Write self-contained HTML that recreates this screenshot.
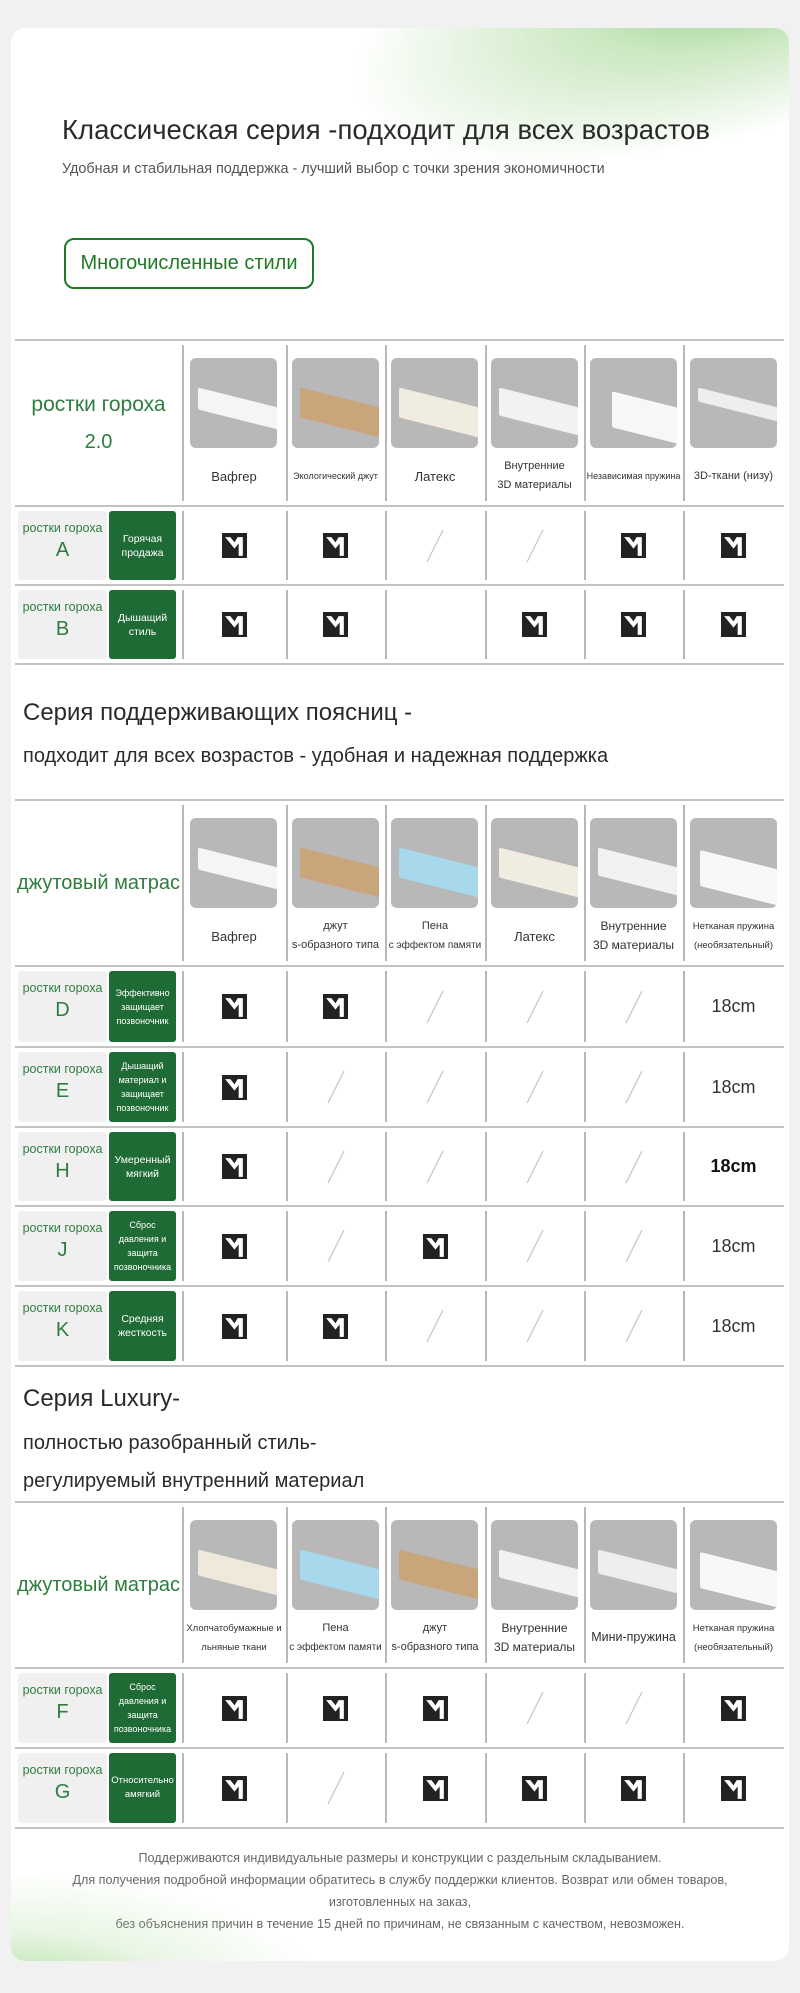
<!DOCTYPE html>
<html><head><meta charset="utf-8">
<style>
*{margin:0;padding:0;box-sizing:border-box}
body{width:800px;height:1993px;background:#f1f1f1;font-family:"Liberation Sans","DejaVu Sans",sans-serif;position:relative;overflow:hidden}
.card{position:absolute;left:11px;top:28px;width:778px;height:1933px;background:#fff;border-radius:14px;overflow:hidden}
.card:before{content:'';position:absolute;right:-80px;top:-150px;width:560px;height:320px;background:radial-gradient(ellipse at 88% 45%,rgba(110,190,95,.9) 0%,rgba(140,205,120,.45) 30%,rgba(255,255,255,0) 65%);transform:rotate(-18deg)}
.card:after{content:'';position:absolute;left:-80px;bottom:-70px;width:420px;height:170px;background:radial-gradient(ellipse at 20% 80%,rgba(120,200,100,.6) 0%,rgba(170,220,150,.25) 35%,rgba(255,255,255,0) 65%)}
.abs{position:absolute;white-space:nowrap}
.t1{left:51px;top:86px;font-size:27.5px;color:#2a2a2a}
.t2{left:51px;top:133px;font-size:14.4px;color:#555}
.btn{position:absolute;left:53px;top:210px;width:250px;height:51px;border:2px solid #1e7a24;border-radius:10px;color:#1e7a24;font-size:20px;display:flex;align-items:center;justify-content:center}
.h{color:#2a2a2a}
.tbl{position:absolute;left:15px;width:769px}
.hl{height:2px;background:#c2c2c2}
.row{display:grid;grid-template-columns:167px 104px 99px 100px 99px 99px 101px;position:relative}
.c{position:relative;display:flex;align-items:center;justify-content:center}
.s:before{content:'';position:absolute;left:0;top:4px;bottom:4px;width:2px;background:#b8b8b8}
.im{position:absolute;top:17px;left:50%;margin-left:-44px;width:87px;height:90px;background:#b8b8b8;border-radius:6px;overflow:hidden}
.sl1{position:absolute;left:8px;top:42px;width:100px;height:22px;transform:skewY(14deg);border-radius:2px}
.cap{position:absolute;left:0;right:0;text-align:center;color:#333;font-size:12px;line-height:19px;white-space:nowrap}
.ck{width:25px;height:25px}
.sl{width:20px;height:34px}
.lab{position:relative}
.g{position:absolute;left:3px;top:4px;bottom:4px;width:89px;background:#f0f0f0;border-radius:3px;color:#2e7d3e;text-align:center}
.g span{display:block;font-size:12.5px;margin-top:10px}
.g b{display:block;font-weight:normal;font-size:20px;margin-top:4px}
.gr{position:absolute;left:94px;top:4px;bottom:4px;width:67px;background:#1f6b35;border-radius:3px;color:#fff;font-size:10.5px;line-height:14px;display:flex;align-items:center;justify-content:center;text-align:center}
.lh{color:#2e7d3e;font-size:20px;display:flex;align-items:center;justify-content:center;flex-direction:column;text-align:center}
.cm{font-size:18px;color:#333}
.ft{position:absolute;left:0;width:778px;text-align:center;color:#666;font-size:12.6px}
</style></head><body>
<div class="card">
<div class="abs t1">Классическая серия -подходит для всех возрастов</div>
<div class="abs t2">Удобная и стабильная поддержка - лучший выбор с точки зрения экономичности</div>
<div class="btn">Многочисленные стили</div>
<div class="abs h" style="left:12px;top:671px;font-size:24px">Серия поддерживающих поясниц -</div>
<div class="abs h" style="left:12px;top:717px;font-size:20px">подходит для всех возрастов - удобная и надежная поддержка</div>
<div class="abs h" style="left:12px;top:1357px;font-size:24px">Серия Luxury-</div>
<div class="abs h" style="left:12px;top:1404px;font-size:20px">полностью разобранный стиль-</div>
<div class="abs h" style="left:12px;top:1442px;font-size:20px">регулируемый внутренний материал</div>
<div class="ft" style="top:1823px">Поддерживаются индивидуальные размеры и конструкции с раздельным складыванием.</div>
<div class="ft" style="top:1845px">Для получения подробной информации обратитесь в службу поддержки клиентов. Возврат или обмен товаров,</div>
<div class="ft" style="top:1867px">изготовленных на заказ,</div>
<div class="ft" style="top:1889px">без объяснения причин в течение 15 дней по причинам, не связанным с качеством, невозможен.</div>
</div>

<svg width="0" height="0" style="position:absolute"><defs>
<symbol id="ck" viewBox="0 0 24 24"><rect width="24" height="24" fill="#222"/><path d="M3 4 L8 4 L12 9 L15 4 L20 4 L20 22 L16 22 L16 10 L12 15 Z" fill="#fff"/></symbol>
<symbol id="sl" viewBox="0 0 20 34"><line x1="2" y1="33" x2="18" y2="1" stroke="#c8c8c8" stroke-width="1.3"/></symbol>
</defs></svg>

<!-- TABLE 1 -->
<div class="tbl" style="top:339px">
<div class="hl"></div>
<div class="row" style="height:164px">
<div class="c lh"><div style="font-size:21px">ростки гороха</div><div style="margin-top:14px">2.0</div></div>
<div class="c s"><div class="im"><div class="sl1" style="background:#f5f5f5"></div></div><div class="cap" style="top:126px;font-size:13px">Вафгер</div></div>
<div class="c s"><div class="im"><div class="sl1" style="background:#c9a57c;height:30px"></div></div><div class="cap" style="top:126px;font-size:9px">Экологический джут</div></div>
<div class="c s"><div class="im"><div class="sl1" style="background:#f0ede0;height:30px"></div></div><div class="cap" style="top:126px;font-size:13px">Латекс</div></div>
<div class="c s"><div class="im"><div class="sl1" style="background:#f2f2f2;height:28px"></div></div><div class="cap" style="top:116px;font-size:11px">Внутренние<br>3D материалы</div></div>
<div class="c s"><div class="im"><div class="sl1" style="background:#f7f7f7;height:36px;left:22px;width:70px"></div></div><div class="cap" style="top:126px;font-size:9px">Независимая пружина</div></div>
<div class="c s"><div class="im"><div class="sl1" style="background:#eee;height:14px"></div></div><div class="cap" style="top:126px;font-size:11px">3D-ткани (низу)</div></div>
</div>
<div class="hl"></div>
<div class="row" style="height:77px">
<div class="lab"><div class="g"><span>ростки гороха</span><b>A</b></div><div class="gr">Горячая<br>продажа</div></div>
<div class="c s"><svg class="ck"><use href="#ck"/></svg></div>
<div class="c s"><svg class="ck"><use href="#ck"/></svg></div>
<div class="c s"><svg class="sl"><use href="#sl"/></svg></div>
<div class="c s"><svg class="sl"><use href="#sl"/></svg></div>
<div class="c s"><svg class="ck"><use href="#ck"/></svg></div>
<div class="c s"><svg class="ck"><use href="#ck"/></svg></div>
</div>
<div class="hl"></div>
<div class="row" style="height:77px">
<div class="lab"><div class="g"><span>ростки гороха</span><b>B</b></div><div class="gr">Дышащий<br>стиль</div></div>
<div class="c s"><svg class="ck"><use href="#ck"/></svg></div>
<div class="c s"><svg class="ck"><use href="#ck"/></svg></div>
<div class="c s"></div>
<div class="c s"><svg class="ck"><use href="#ck"/></svg></div>
<div class="c s"><svg class="ck"><use href="#ck"/></svg></div>
<div class="c s"><svg class="ck"><use href="#ck"/></svg></div>
</div>
<div class="hl"></div>
</div>

<!-- TABLE 2 -->
<div class="tbl" style="top:799px">
<div class="hl"></div>
<div class="row" style="height:164px">
<div class="c lh">джутовый матрас</div>
<div class="c s"><div class="im"><div class="sl1" style="background:#f5f5f5"></div></div><div class="cap" style="top:126px;font-size:13px">Вафгер</div></div>
<div class="c s"><div class="im"><div class="sl1" style="background:#c9a57c;height:30px"></div></div><div class="cap" style="top:116px;font-size:11px">джут<br>s-образного типа</div></div>
<div class="c s"><div class="im"><div class="sl1" style="background:#a8d8ec;height:30px"></div></div><div class="cap" style="top:116px;font-size:11px">Пена<br><span style="font-size:10px">с эффектом памяти</span></div></div>
<div class="c s"><div class="im"><div class="sl1" style="background:#f0ede0;height:30px"></div></div><div class="cap" style="top:126px;font-size:13px">Латекс</div></div>
<div class="c s"><div class="im"><div class="sl1" style="background:#f2f2f2;height:28px"></div></div><div class="cap" style="top:116px;font-size:12px">Внутренние<br>3D материалы</div></div>
<div class="c s"><div class="im"><div class="sl1" style="background:#f7f7f7;height:36px;left:10px;width:80px"></div></div><div class="cap" style="top:116px;font-size:9.5px">Нетканая пружина<br>(необязательный)</div></div>
</div>
<div class="hl"></div>
<div class="row" style="height:79px">
<div class="lab"><div class="g"><span>ростки гороха</span><b>D</b></div><div class="gr" style="font-size:9px">Эффективно<br>защищает<br>позвоночник</div></div>
<div class="c s"><svg class="ck"><use href="#ck"/></svg></div>
<div class="c s"><svg class="ck"><use href="#ck"/></svg></div>
<div class="c s"><svg class="sl"><use href="#sl"/></svg></div>
<div class="c s"><svg class="sl"><use href="#sl"/></svg></div>
<div class="c s"><svg class="sl"><use href="#sl"/></svg></div>
<div class="c s cm">18cm</div>
</div>
<div class="hl"></div>
<div class="row" style="height:78px">
<div class="lab"><div class="g"><span>ростки гороха</span><b>E</b></div><div class="gr" style="font-size:9px">Дышащий<br>материал и<br>защищает<br>позвоночник</div></div>
<div class="c s"><svg class="ck"><use href="#ck"/></svg></div>
<div class="c s"><svg class="sl"><use href="#sl"/></svg></div>
<div class="c s"><svg class="sl"><use href="#sl"/></svg></div>
<div class="c s"><svg class="sl"><use href="#sl"/></svg></div>
<div class="c s"><svg class="sl"><use href="#sl"/></svg></div>
<div class="c s cm">18cm</div>
</div>
<div class="hl"></div>
<div class="row" style="height:77px">
<div class="lab"><div class="g"><span>ростки гороха</span><b>H</b></div><div class="gr">Умеренный<br>мягкий</div></div>
<div class="c s"><svg class="ck"><use href="#ck"/></svg></div>
<div class="c s"><svg class="sl"><use href="#sl"/></svg></div>
<div class="c s"><svg class="sl"><use href="#sl"/></svg></div>
<div class="c s"><svg class="sl"><use href="#sl"/></svg></div>
<div class="c s"><svg class="sl"><use href="#sl"/></svg></div>
<div class="c s cm" style="font-weight:bold;color:#111">18cm</div>
</div>
<div class="hl"></div>
<div class="row" style="height:78px">
<div class="lab"><div class="g"><span>ростки гороха</span><b>J</b></div><div class="gr" style="font-size:9px">Сброс<br>давления и<br>защита<br>позвоночника</div></div>
<div class="c s"><svg class="ck"><use href="#ck"/></svg></div>
<div class="c s"><svg class="sl"><use href="#sl"/></svg></div>
<div class="c s"><svg class="ck"><use href="#ck"/></svg></div>
<div class="c s"><svg class="sl"><use href="#sl"/></svg></div>
<div class="c s"><svg class="sl"><use href="#sl"/></svg></div>
<div class="c s cm">18cm</div>
</div>
<div class="hl"></div>
<div class="row" style="height:78px">
<div class="lab"><div class="g"><span>ростки гороха</span><b>K</b></div><div class="gr">Средняя<br>жесткость</div></div>
<div class="c s"><svg class="ck"><use href="#ck"/></svg></div>
<div class="c s"><svg class="ck"><use href="#ck"/></svg></div>
<div class="c s"><svg class="sl"><use href="#sl"/></svg></div>
<div class="c s"><svg class="sl"><use href="#sl"/></svg></div>
<div class="c s"><svg class="sl"><use href="#sl"/></svg></div>
<div class="c s cm">18cm</div>
</div>
<div class="hl"></div>
</div>

<!-- TABLE 3 -->
<div class="tbl" style="top:1501px">
<div class="hl"></div>
<div class="row" style="height:164px">
<div class="c lh">джутовый матрас</div>
<div class="c s"><div class="im"><div class="sl1" style="background:#efe9dc;height:26px"></div></div><div class="cap" style="top:116px;font-size:9.5px">Хлопчатобумажные и<br>льняные ткани</div></div>
<div class="c s"><div class="im"><div class="sl1" style="background:#a8d8ec;height:30px"></div></div><div class="cap" style="top:116px;font-size:11px">Пена<br><span style="font-size:10px">с эффектом памяти</span></div></div>
<div class="c s"><div class="im"><div class="sl1" style="background:#c9a57c;height:30px"></div></div><div class="cap" style="top:116px;font-size:11px">джут<br>s-образного типа</div></div>
<div class="c s"><div class="im"><div class="sl1" style="background:#f2f2f2;height:28px"></div></div><div class="cap" style="top:116px;font-size:12px">Внутренние<br>3D материалы</div></div>
<div class="c s"><div class="im"><div class="sl1" style="background:#eee;height:24px"></div></div><div class="cap" style="top:125px;font-size:12.5px">Мини-пружина</div></div>
<div class="c s"><div class="im"><div class="sl1" style="background:#f7f7f7;height:36px;left:10px;width:80px"></div></div><div class="cap" style="top:116px;font-size:9.5px">Нетканая пружина<br>(необязательный)</div></div>
</div>
<div class="hl"></div>
<div class="row" style="height:78px">
<div class="lab"><div class="g"><span>ростки гороха</span><b>F</b></div><div class="gr" style="font-size:9px">Сброс<br>давления и<br>защита<br>позвоночника</div></div>
<div class="c s"><svg class="ck"><use href="#ck"/></svg></div>
<div class="c s"><svg class="ck"><use href="#ck"/></svg></div>
<div class="c s"><svg class="ck"><use href="#ck"/></svg></div>
<div class="c s"><svg class="sl"><use href="#sl"/></svg></div>
<div class="c s"><svg class="sl"><use href="#sl"/></svg></div>
<div class="c s"><svg class="ck"><use href="#ck"/></svg></div>
</div>
<div class="hl"></div>
<div class="row" style="height:78px">
<div class="lab"><div class="g"><span>ростки гороха</span><b>G</b></div><div class="gr" style="font-size:9.5px">Относительно<br>амягкий</div></div>
<div class="c s"><svg class="ck"><use href="#ck"/></svg></div>
<div class="c s"><svg class="sl"><use href="#sl"/></svg></div>
<div class="c s"><svg class="ck"><use href="#ck"/></svg></div>
<div class="c s"><svg class="ck"><use href="#ck"/></svg></div>
<div class="c s"><svg class="ck"><use href="#ck"/></svg></div>
<div class="c s"><svg class="ck"><use href="#ck"/></svg></div>
</div>
<div class="hl"></div>
</div>
</body></html>
